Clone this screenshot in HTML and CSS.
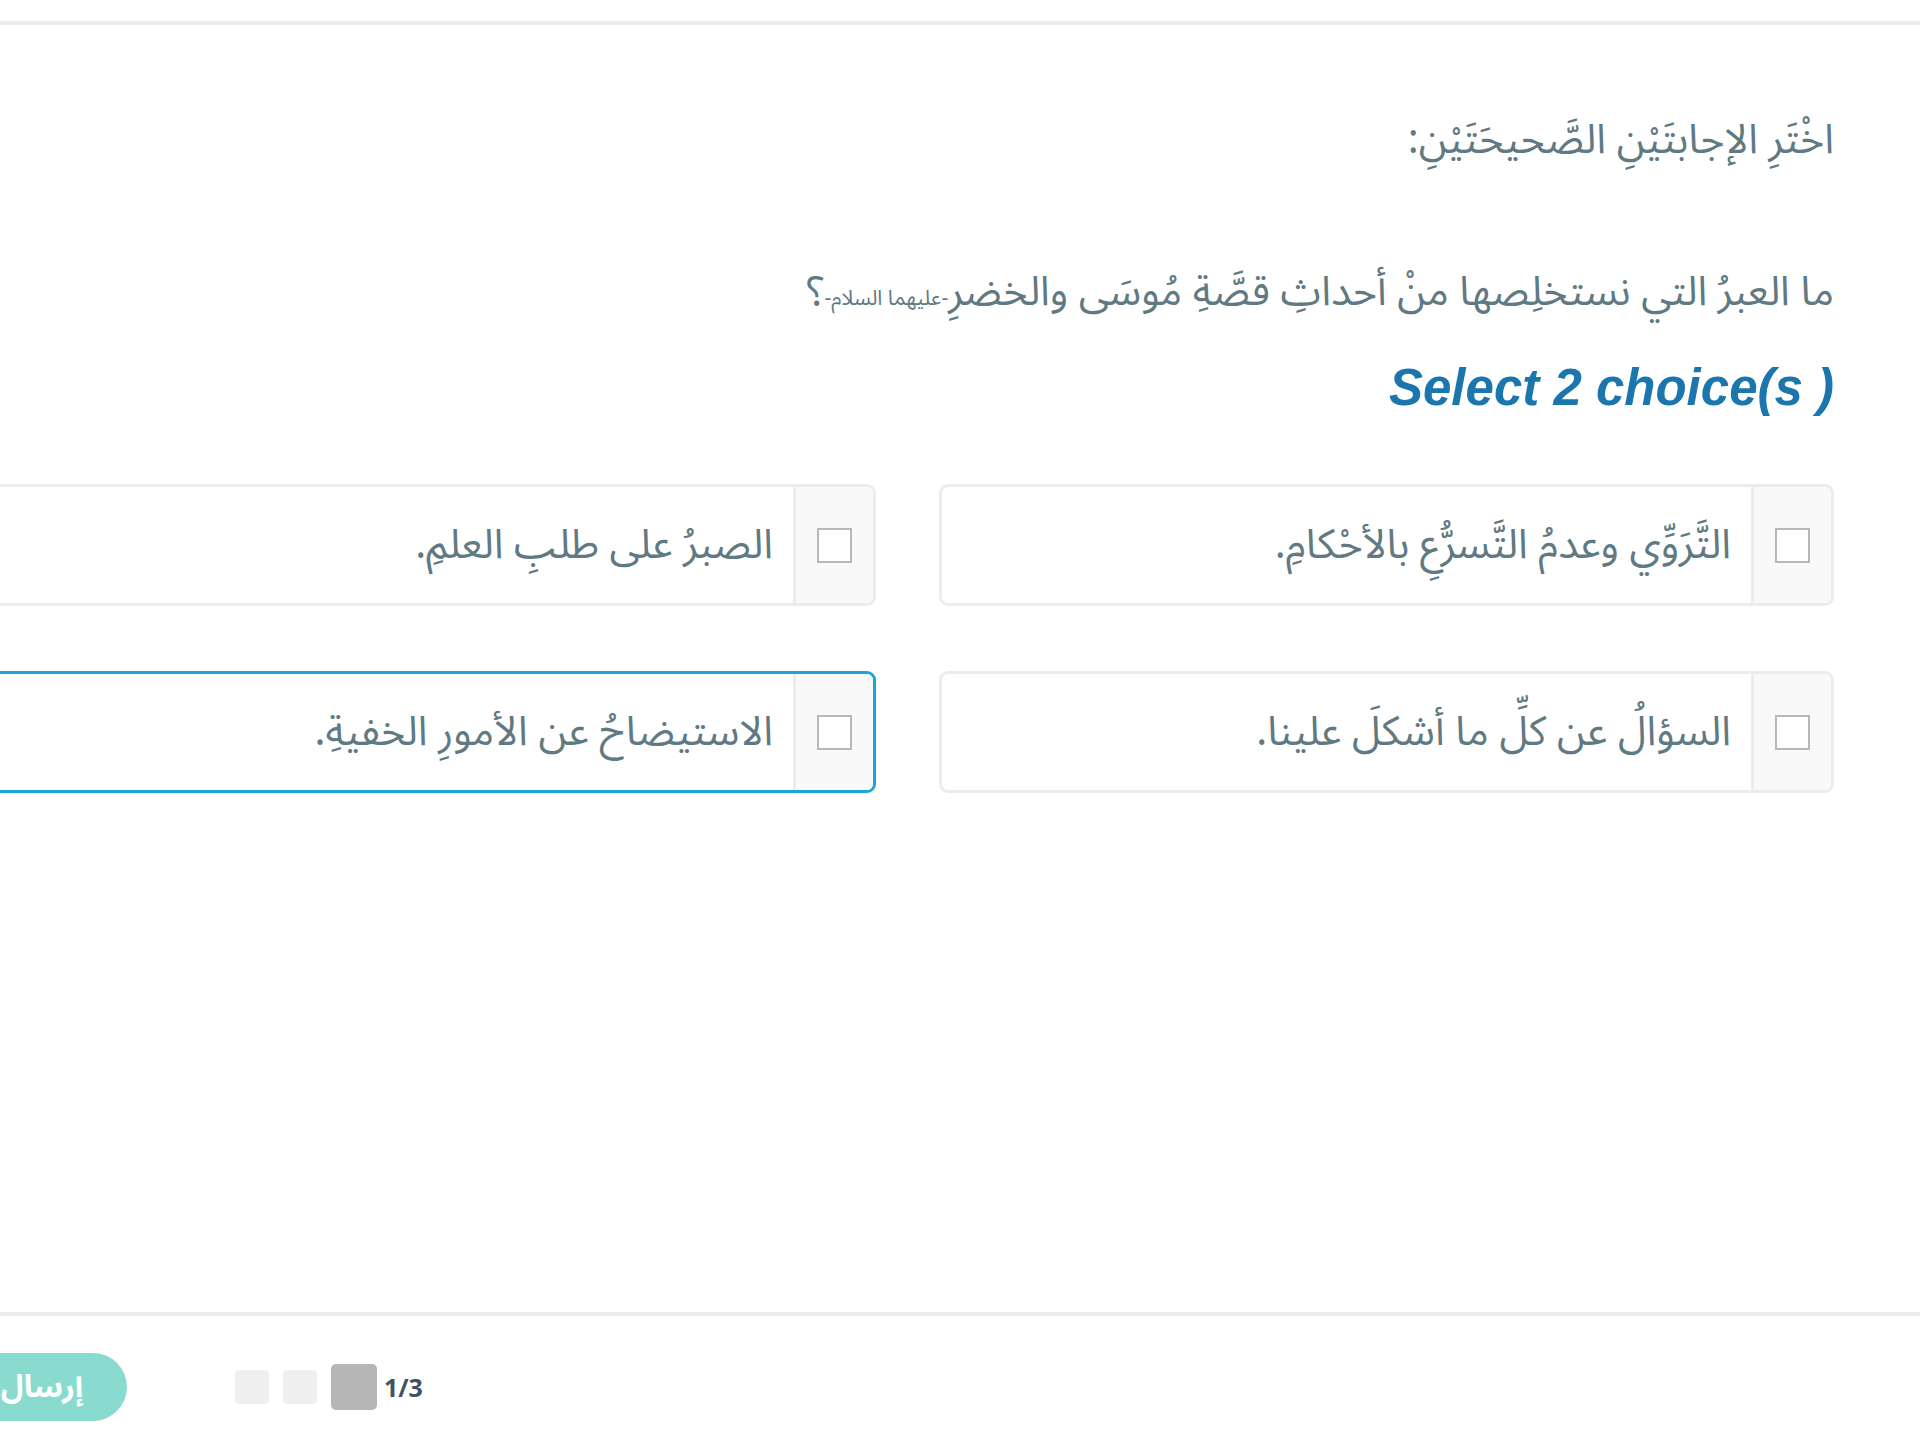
FILE: index.html
```html
<!DOCTYPE html>
<html lang="ar">
<head>
  <meta charset="UTF-8" />
  <title>Quiz</title>
  <link rel="stylesheet" href="styles.css">
</head>
<body>

  <!-- Top divider -->
  <div class="top-bar"></div>

  <!-- Question area -->
  <div class="quiz">
    <div class="instruction">اخْتَرِ الإجابتَيْنِ الصَّحيحَتَيْنِ:</div>

    <div class="question">ما العبرُ التي نستخلِصها منْ أحداثِ قصَّةِ مُوسَى والخضرِ<span class="small">-عليهما السلام-</span>؟</div>

    <div class="select-hint">Select 2 choice(s )</div>

    <div class="choices">
      <div class="choice">
        <div class="check-cell"><span class="checkbox"></span></div>
        <div class="choice-text">التَّرَوِّي وعدمُ التَّسرُّعِ بالأحْكامِ.</div>
      </div>
      <div class="choice">
        <div class="check-cell"><span class="checkbox"></span></div>
        <div class="choice-text">الصبرُ على طلبِ العلمِ.</div>
      </div>
      <div class="choice">
        <div class="check-cell"><span class="checkbox"></span></div>
        <div class="choice-text">السؤالُ عن كلِّ ما أشكلَ علينا.</div>
      </div>
      <div class="choice active">
        <div class="check-cell"><span class="checkbox"></span></div>
        <div class="choice-text">الاستيضاحُ عن الأمورِ الخفيةِ.</div>
      </div>
    </div>
  </div>

  <!-- Footer: submit + pagination -->
  <div class="footer">
    <button class="submit">إرسال</button>
    <div class="pager">
      <span class="dot"></span>
      <span class="dot"></span>
      <span class="dot current"></span>
      <span class="pager-label">1/3</span>
    </div>
  </div>

</body>
</html>
```

FILE: styles.css
```css
/* Basic reset */
* {
  box-sizing: border-box;
  margin: 0;
  padding: 0;
}
body {
  font-family: "Noto Sans Arabic", "Noto Naskh Arabic", "DejaVu Sans", sans-serif;
  background: #fff;
  color: #5f7a82;
  overflow: hidden;
  width: 1920px;
  height: 1440px;
}

/* Top divider */
.top-bar {
  height: 25px;
  border-bottom: 4px solid #ebebeb;
}

/* Question area (left column runs past the viewport edge) */
.quiz {
  direction: rtl;
  width: 1939px;
  margin-left: -19px;
  padding-right: 86px;
  height: 1291px;
  padding-top: 87px;
  border-bottom: 4px solid #ebebeb;
}
.instruction {
  font-size: 41px;
  line-height: 56px;
}
.question {
  font-size: 41px;
  line-height: 56px;
  margin-top: 96px;
}
.question .small {
  font-size: 21px;
}
.select-hint {
  direction: ltr;
  text-align: right;
  font-family: "Liberation Sans", Arial, sans-serif;
  font-weight: 700;
  font-style: italic;
  font-size: 51px;
  line-height: 62px;
  color: #1a76ad;
  margin-top: 31px;
}

/* Choice cards */
.choices {
  display: grid;
  grid-template-columns: 895px 895px;
  column-gap: 63px;
  row-gap: 65px;
  margin-top: 65px;
}
.choice {
  display: flex;
  height: 122px;
  border: 3px solid #ececec;
  border-radius: 9px;
  overflow: hidden;
  background: #fff;
}
.choice.active {
  border-color: #1ba3da;
}
.check-cell {
  width: 80px;
  flex-shrink: 0;
  background: #f9f9f9;
  border-left: 3px solid #ececec;
  display: flex;
  align-items: center;
  justify-content: center;
}
.checkbox {
  width: 35px;
  height: 35px;
  border: 2px solid #b8b8b8;
  background: #fff;
}
.choice-text {
  display: flex;
  align-items: center;
  padding-right: 20px;
  font-size: 41px;
}

/* Footer */
.footer {
  display: flex;
  align-items: center;
  height: 120px;
  padding-top: 22px;
}
.submit {
  width: 170px;
  height: 68px;
  margin-left: -43px;
  border: none;
  border-radius: 34px;
  background: #8adbcf;
  color: #fff;
  font-family: "Noto Sans Arabic", "DejaVu Sans", sans-serif;
  font-size: 31px;
  font-weight: 700;
}
.pager {
  display: flex;
  align-items: center;
  gap: 14px;
  margin-left: 108px;
}
.dot {
  width: 34px;
  height: 34px;
  border-radius: 4px;
  background: #efefef;
}
.dot.current {
  width: 46px;
  height: 46px;
  border-radius: 5px;
  background: #b6b6b6;
}
.pager-label {
  margin-left: -7px;
  font-family: "Open Sans", "Liberation Sans", sans-serif;
  font-weight: 700;
  font-size: 25px;
  color: #44525f;
}
```
